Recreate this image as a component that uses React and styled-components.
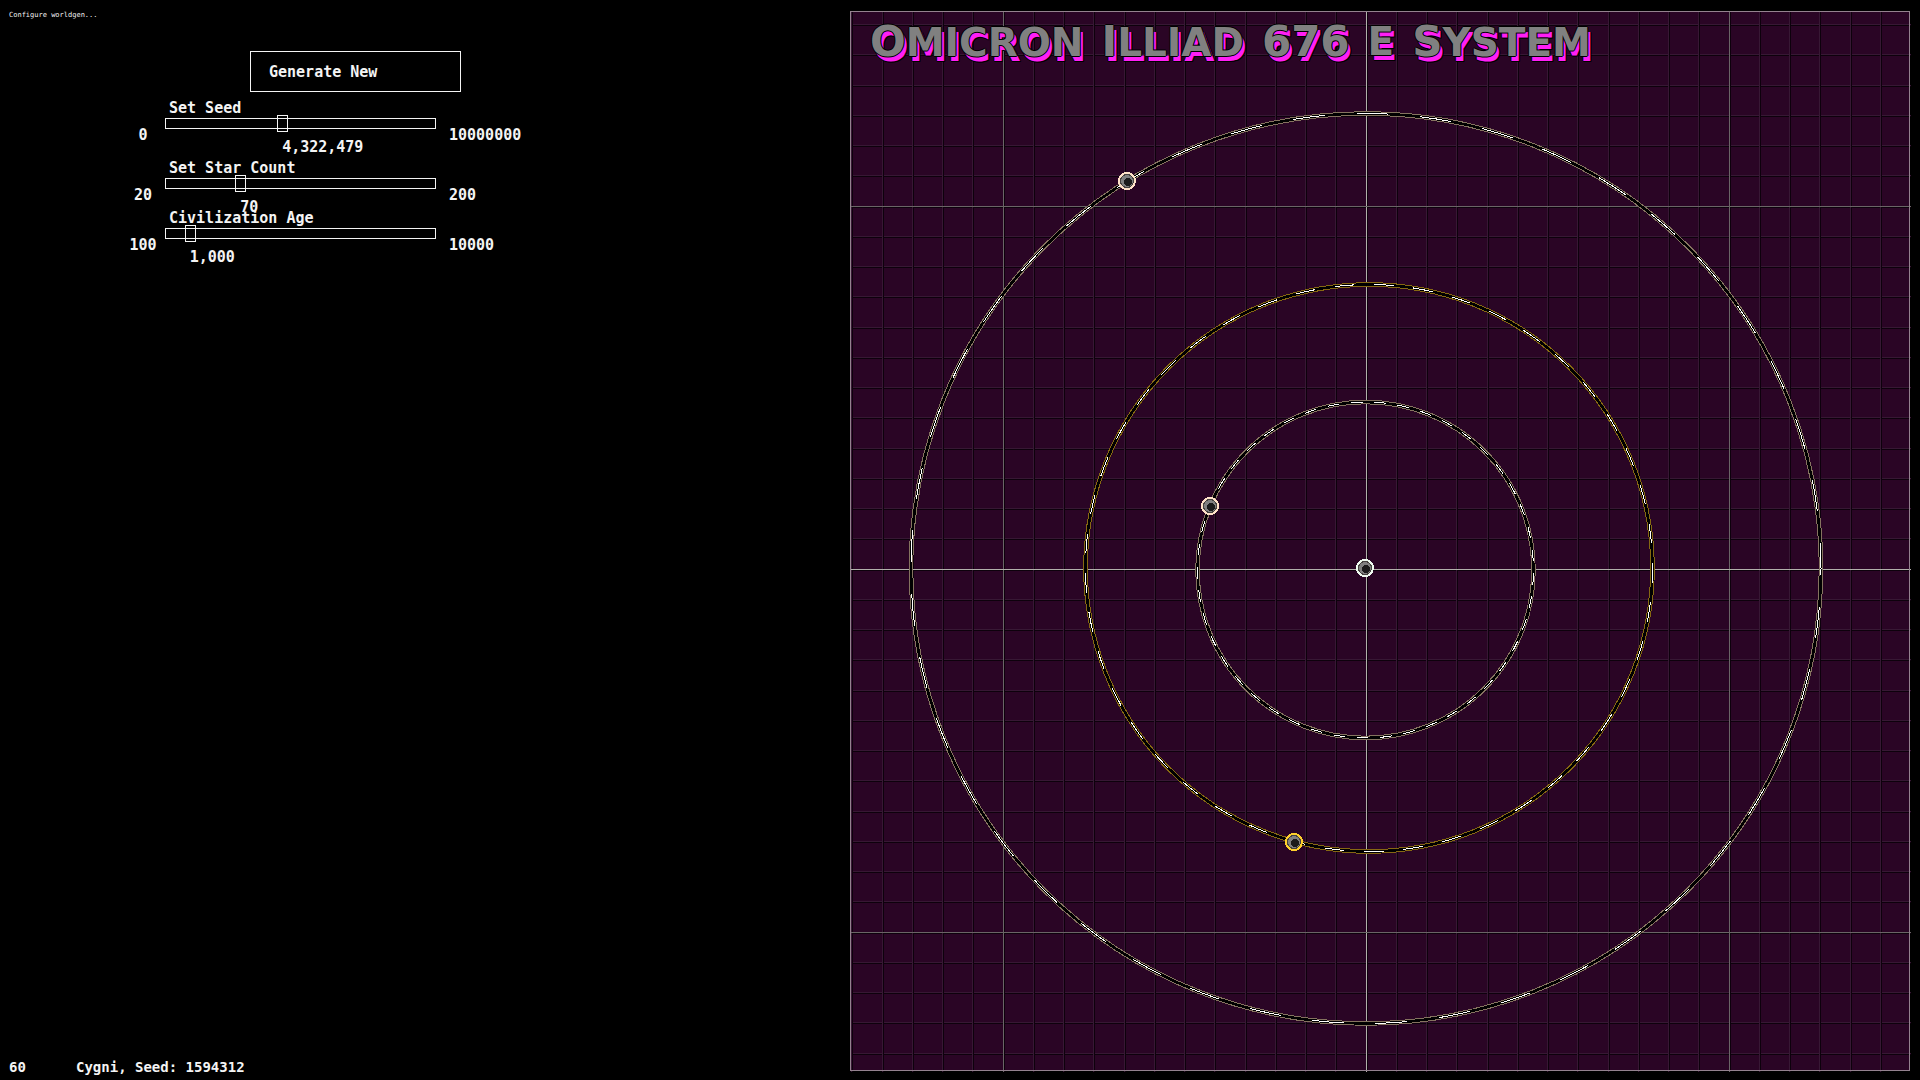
import React, { useState } from "react";
import styled, { createGlobalStyle } from "styled-components";

const GlobalStyle = createGlobalStyle`
  *, *::before, *::after { box-sizing: border-box; }
  body { margin: 0; background: #000; }
`;

const Page = styled.div`
  display: grid;
  grid-template-columns: minmax(0, 1fr) auto;
  min-height: 100vh;
  background: #000;
  color: #f4f4f4;
  font: bold 14px/16px "DejaVu Sans Mono", "Liberation Mono", monospace;
`;

const Sidebar = styled.main`
  display: flex;
  flex-direction: column;
  padding: 11px 9px 5px;
`;

const Status = styled.p`
  margin: 0;
  font-size: 7px;
  font-weight: normal;
  line-height: 8px;
`;

const Controls = styled.form`
  display: flex;
  flex-direction: column;
  align-items: flex-start;
  margin: 32px 0 0 112px;
  font-size: 15px;
`;

const GenerateButton = styled.button`
  width: 211px;
  height: 41px;
  margin: 0 0 8px 129px;
  padding: 0 18px;
  border: 1px solid #f4f4f4;
  background: transparent;
  color: inherit;
  font: inherit;
  text-align: left;
  cursor: pointer;
`;

const SliderRow = styled.div`
  display: grid;
  grid-template-columns: 44px 271px auto;
  margin-top: ${(p) => (p.$tight ? "-10px" : "0")};
  margin-bottom: ${(p) => (p.$tight ? "0" : "5px")};
`;

const Bound = styled.span`
  margin-top: 27px;
  padding-left: ${(p) => (p.$end ? "13px" : "0")};
  text-align: ${(p) => (p.$end ? "left" : "center")};
`;

const SliderLabel = styled.label`
  display: block;
  margin-bottom: 2px;
  padding-left: 4px;
`;

const Track = styled.div`
  display: flex;
  align-items: center;
  height: 11px;
  margin-bottom: 10px;
  border: 1px solid #f4f4f4;
`;

const Range = styled.input`
  appearance: none;
  flex: none;
  width: calc(100% + 12px);
  height: 17px;
  margin: 0 -6px;
  background: transparent;
  cursor: pointer;

  &::-webkit-slider-runnable-track {
    height: 17px;
    background: transparent;
  }

  &::-webkit-slider-thumb {
    appearance: none;
    width: 11px;
    height: 17px;
    border: 1px solid #f4f4f4;
    border-radius: 0;
    background: transparent;
  }
`;

const Value = styled.output`
  display: block;
`;

const Footer = styled.footer`
  display: grid;
  grid-template-columns: 67px auto;
  margin-top: auto;
`;

const MapPanel = styled.section`
  position: relative;
  height: calc(100vh - 20px);
  aspect-ratio: 1;
  margin: 11px 10px 9px 0;
  padding: 11px 20px;
`;

const Chart = styled.svg`
  position: absolute;
  inset: 0;
  width: 100%;
  height: 100%;
  overflow: visible;
`;

const Title = styled.h1`
  position: relative;
  display: flex;
  gap: 18px;
  margin: 0;
  color: #808080;
  font: bold 39px/40px "DejaVu Sans", Inter, sans-serif;
  text-transform: uppercase;
  text-shadow:
    1px 0 #000, -1px 0 #000, 0 1px #000, 0 -1px #000,
    3px 5px #ff1ff5,
    4px 5px #000, 2px 5px #000, 3px 6px #000, 4px 6px #000;
`;

const Word = styled.span`
  display: block;

  &::first-letter { font-size: 42px; }
`;

const MinorWord = styled.span`
  display: block;
`;

const Numeral = styled.span`
  display: block;
  font-size: 42px;
`;

const CENTER = { x: 516, y: 558 };
const STEP = 30.25;

const LINES = Array.from({ length: 37 }, (_, i) => i - 18);

const ORBITS = [
  { cx: 516, cy: 557.5, r: 455, start: 4.8, color: "#85735f" },
  { cx: 519, cy: 557, r: 283.5, start: 7, color: "#866812" },
  { cx: 515.5, cy: 559, r: 168, start: 1, color: "#85735f" },
];

const BODIES = [
  { x: 277, y: 170, color: "#ffe2c8" },
  { x: 360, y: 495, color: "#ffe2c8" },
  { x: 444, y: 831, color: "#ffd02c" },
  { x: 515, y: 557, color: "#effbf0" },
];

function lineColor(k) {
  if (k === 0) return "#b2b0ab";
  return k % 12 === 0 ? "#6a6566" : "#371834";
}

function place(center) {
  return LINES.map((k) => ({ k, p: Math.floor(center + k * STEP) })).filter(
    ({ p }) => p > 0 && p < 1059
  );
}

function Grid() {
  const columns = place(CENTER.x);
  const rows = place(CENTER.y);
  return (
    <g shapeRendering="crispEdges">
      {rows.map(({ k, p }) => (
        <g key={`r${k}`}>
          <rect x="0" y={p} width="1061" height="1" fill={lineColor(k)} />
          <rect x="0" y={p + 1} width="1061" height="1" fill="#0d010c" />
        </g>
      ))}
      {columns.map(({ k, p }) => (
        <g key={`c${k}`}>
          <rect x={p} y="0" width="1" height="1061" fill={lineColor(k)} />
          <rect x={p + 1} y="0" width="1" height="1061" fill="#0d010c" />
        </g>
      ))}
      {rows
        .filter(({ k }) => k % 12 === 0)
        .map(({ k, p }) => (
          <rect key={`m${k}`} x="0" y={p} width="1061" height="1" fill={lineColor(k)} />
        ))}
    </g>
  );
}

function Orbit({ cx, cy, r, start, color }) {
  const ring = { cx, cy, r, fill: "none" };
  return (
    <g shapeRendering="crispEdges">
      <circle {...ring} stroke={color} strokeWidth="4.6" />
      <circle {...ring} stroke="#000" strokeWidth="2.6" />
      <circle
        {...ring}
        stroke="#fff"
        strokeWidth="1"
        pathLength="360"
        strokeDasharray="4 4"
        strokeDashoffset={-start}
      />
    </g>
  );
}

function Body({ x, y, color }) {
  return (
    <g shapeRendering="crispEdges">
      <circle cx={x} cy={y} r="9" fill={color} />
      <circle cx={x} cy={y} r="7" fill="#45423f" />
      <circle cx={x} cy={y} r="6" fill="#808080" />
      <circle cx={x + 1} cy={y + 1} r="4" fill="#1b1b1b" />
    </g>
  );
}

function Slider({ id, label, min, max, initial, tight }) {
  const [value, setValue] = useState(initial);
  const ratio = (value - min) / (max - min);
  return (
    <SliderRow $tight={tight}>
      <Bound>{min}</Bound>
      <div>
        <SliderLabel htmlFor={id}>{label}</SliderLabel>
        <Track>
          <Range
            id={id}
            type="range"
            min={min}
            max={max}
            value={value}
            onChange={(e) => setValue(Number(e.target.value))}
          />
        </Track>
        <Value htmlFor={id} style={{ paddingLeft: `${ratio * 100}%` }}>
          {value.toLocaleString("en-US")}
        </Value>
      </div>
      <Bound $end>{max}</Bound>
    </SliderRow>
  );
}

export default function App() {
  return (
    <Page>
      <GlobalStyle />
      <Sidebar>
        <Status>Configure worldgen...</Status>
        <Controls onSubmit={(e) => e.preventDefault()}>
          <GenerateButton type="submit">Generate New</GenerateButton>
          <Slider id="seed" label="Set Seed" min={0} max={10000000} initial={4322479} />
          <Slider id="stars" label="Set Star Count" min={20} max={200} initial={70} />
          <Slider id="age" label="Civilization Age" min={100} max={10000} initial={1000} tight />
        </Controls>
        <Footer>
          <span>60</span>
          <span>Cygni, Seed: 1594312</span>
        </Footer>
      </Sidebar>
      <MapPanel>
        <Chart viewBox="0 0 1060 1060" aria-hidden="true">
          <rect width="1060" height="1060" fill="#2a0525" />
          <Grid />
          <rect
            x="0.5"
            y="0.5"
            width="1059"
            height="1059"
            fill="none"
            stroke="#94828f"
            shapeRendering="crispEdges"
          />
          {ORBITS.map((o) => (
            <Orbit key={o.r} {...o} />
          ))}
          {BODIES.map((b) => (
            <Body key={`${b.x}-${b.y}`} {...b} />
          ))}
        </Chart>
        <Title>
          <Word>Omicron</Word> <Word>Illiad</Word> <Numeral>676</Numeral>{" "}
          <MinorWord>E</MinorWord> <Word>System</Word>
        </Title>
      </MapPanel>
    </Page>
  );
}
